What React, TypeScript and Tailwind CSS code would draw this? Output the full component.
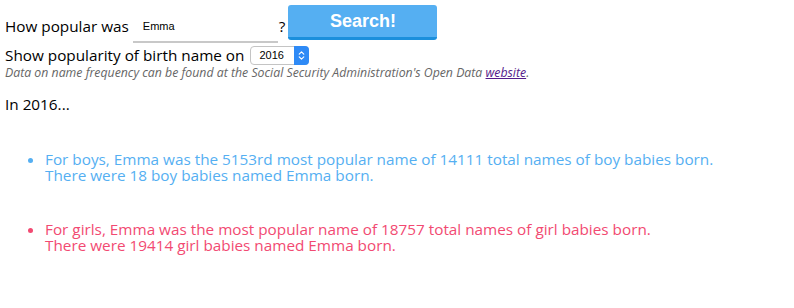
import { ChevronsUpDown } from 'lucide-react';

const font = { fontFamily: '"Open Sans", "DejaVu Sans", sans-serif' };

export default function App() {
  return (
    <div className="min-h-[308px] bg-white px-[5px] text-[15.3px] text-black" style={font}>
      <div className="flex items-start pt-[5px]">
        <span className="mt-[12px] leading-[18px]">How popular was</span>
        <div className="ml-[4px] mt-[6px] flex h-[32px] w-[145px] items-center border-b-2 border-[#c8c8c8] pl-[10px] text-[11px] font-['Liberation_Sans',sans-serif]">
          Emma
        </div>
        <span className="mt-[12px] ml-px leading-[18px]">?</span>
        <button
          type="button"
          className="ml-[3px] h-[35px] w-[149px] rounded-[3px] border-b-[3px] border-[#1b8fdc] bg-[#55aff2] text-[18px] font-bold text-white font-['Liberation_Sans',sans-serif]"
        >
          Search!
        </button>
      </div>

      <div className="mt-[2px] flex items-center">
        <span className="leading-[20px]">Show popularity of birth name on</span>
        <div className="ml-[6px] flex h-[19px] w-[59px] items-center justify-between rounded-[4px] border border-[#c4c4c4] pl-[8px] text-[11px] font-['Liberation_Sans',sans-serif]">
          2016
          <span className="grid h-[19px] w-[15px] place-items-center rounded-r-[4px] bg-[#2e8af6] -mr-px">
            <ChevronsUpDown className="size-[11px] text-white" strokeWidth={2.5} />
          </span>
        </div>
      </div>

      <p className="text-[12.3px] italic leading-[15px] text-[#666]">
        Data on name frequency can be found at the Social Security Administration's Open Data{' '}
        <a href="#" className="text-[#551a8b] underline">
          website
        </a>
        .
      </p>

      <p className="mt-[15px] leading-[18px]">In 2016...</p>

      <ul className="mt-[38px] list-disc pl-[40px] leading-[16px]">
        <li className="text-[#55aff2] marker:text-[#55aff2]">
          For boys, Emma was the 5153rd most popular name of 14111 total names of boy babies born.
          <br />
          There were 18 boy babies named Emma born.
        </li>
        <li className="mt-[38px] text-[#f24a72] marker:text-[#f24a72]">
          For girls, Emma was the most popular name of 18757 total names of girl babies born.
          <br />
          There were 19414 girl babies named Emma born.
        </li>
      </ul>
    </div>
  );
}
